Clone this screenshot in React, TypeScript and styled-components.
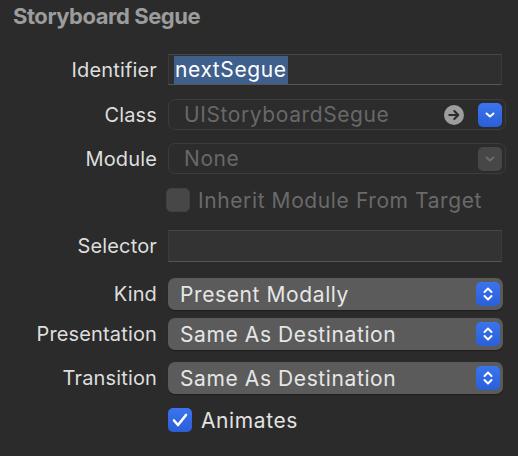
import React from "react";
import styled, { createGlobalStyle } from "styled-components";

const Global = createGlobalStyle`
  html, body { margin: 0; padding: 0; background: #2b2b2b; }
  body { font-family: Inter, "Open Sans", "Liberation Sans", sans-serif; -webkit-font-smoothing: antialiased; }
`;

const Panel = styled.div`
  width: 518px;
  height: 456px;
  background: #2b2b2b;
  box-sizing: border-box;
  padding: 2px 0 0 0;
  display: flex;
  flex-direction: column;
`;

const Title = styled.div`
  font-size: 22px;
  font-weight: 700;
  color: #9c9c9c;
  line-height: 28px;
  padding-left: 13px;
  letter-spacing: -0.45px;
`;

const Row = styled.div<{ $mt: number; $h: number }>`
  display: grid;
  grid-template-columns: 157px 1fr;
  column-gap: 11px;
  align-items: center;
  margin-top: ${(p) => p.$mt}px;
  height: ${(p) => p.$h}px;
  padding-right: 12px;
`;

const Label = styled.div`
  text-align: right;
  font-size: 20px;
  letter-spacing: 0.15px;
  color: #dedede;
  white-space: nowrap;
`;

const TextField = styled.div`
  height: 31px;
  width: 334px;
  box-sizing: border-box;
  background: #2f2f2f;
  border: 1px solid #3a3a3a;
  border-top-color: #474747;
  border-bottom-color: #555555;
  display: flex;
  align-items: center;
  padding-left: 5px;
`;

const Selection = styled.span`
  background: #3f5f8c;
  color: #ffffff;
  font-size: 21px;
  letter-spacing: 0.6px;
  line-height: 28px;
  padding: 0 1px;
`;

const Combo = styled.div`
  height: 31px;
  width: 338px;
  box-sizing: border-box;
  border: 1px solid #3c3c3c;
  border-radius: 7px;
  background: #2c2c2c;
  display: flex;
  align-items: center;
  padding: 0 3px 0 15px;
  color: #686868;
  font-size: 21px;
  letter-spacing: 0.6px;
`;

const ComboText = styled.span`
  flex: 1;
  white-space: nowrap;
`;

const Btn = styled.div<{ $blue?: boolean }>`
  width: 24px;
  height: 24px;
  flex: none;
  border-radius: 5px;
  display: flex;
  align-items: center;
  justify-content: center;
  background: ${(p) => (p.$blue ? "linear-gradient(#3a74ee, #2a5fd8)" : "#474747")};
`;

const ArrowCircle = styled.div`
  margin-right: 14px;
  display: flex;
`;

const CheckRow = styled.div<{ $mt: number; $x: number; $disabled?: boolean }>`
  display: flex;
  align-items: center;
  margin-top: ${(p) => p.$mt}px;
  padding-left: ${(p) => p.$x}px;
  height: 24px;
  gap: ${(p) => (p.$disabled ? 8 : 9)}px;
  font-size: 21px;
  letter-spacing: 0.6px;
  color: ${(p) => (p.$disabled ? "#6a6a6a" : "#e2e2e2")};
`;

const Box = styled.div<{ $on?: boolean }>`
  width: 24px;
  height: 24px;
  box-sizing: border-box;
  border-radius: 5px;
  display: flex;
  align-items: center;
  justify-content: center;
  background: ${(p) => (p.$on ? "linear-gradient(#3a74ee, #2a5fd8)" : "#474747")};
  border: ${(p) => (p.$on ? "none" : "1px solid #404040")};
`;

const EmptyField = styled(TextField)`
  height: 32px;
  background: #333333;
`;

const Popup = styled.div`
  height: 32px;
  width: 335px;
  box-sizing: border-box;
  border-radius: 7px;
  background: #5b5b5b;
  box-shadow: 0 1px 1px rgba(0, 0, 0, 0.35);
  display: flex;
  align-items: center;
  padding: 0 3px 0 12px;
  color: #e6e6e6;
  font-size: 21px;
  letter-spacing: 0.6px;
`;

const ChevronDown = ({ color }: { color: string }) => (
  <svg width="12" height="8" viewBox="0 0 12 8">
    <path d="M2.5 2.5 L6 5.5 L9.5 2.5" fill="none" stroke={color} strokeWidth="2" strokeLinecap="round" strokeLinejoin="round" />
  </svg>
);

const Stepper = () => (
  <svg width="12" height="18" viewBox="0 0 12 18">
    <path d="M2.5 7 L6 3.5 L9.5 7" fill="none" stroke="#fff" strokeWidth="2" strokeLinecap="round" strokeLinejoin="round" />
    <path d="M2.5 11 L6 14.5 L9.5 11" fill="none" stroke="#fff" strokeWidth="2" strokeLinecap="round" strokeLinejoin="round" />
  </svg>
);

const GoArrow = () => (
  <svg width="20" height="20" viewBox="0 0 20 20">
    <circle cx="10" cy="10" r="10" fill="#9d9d9d" />
    <path d="M5.3 10 H14.2 M10.3 6 L14.3 10 L10.3 14" fill="none" stroke="#2b2b2b" strokeWidth="2" strokeLinecap="round" strokeLinejoin="round" />
  </svg>
);

const Check = () => (
  <svg width="18" height="16" viewBox="0 0 18 16">
    <path d="M3 8.5 L7 13 L15 3" fill="none" stroke="#fff" strokeWidth="2.6" strokeLinecap="round" strokeLinejoin="round" />
  </svg>
);

export default function App() {
  return (
    <>
      <Global />
      <Panel>
        <Title>Storyboard Segue</Title>
        <Row $mt={24} $h={31}>
          <Label>Identifier</Label>
          <TextField>
            <Selection>nextSegue</Selection>
          </TextField>
        </Row>
        <Row $mt={14} $h={31}>
          <Label>Class</Label>
          <Combo>
            <ComboText>UIStoryboardSegue</ComboText>
            <ArrowCircle>
              <GoArrow />
            </ArrowCircle>
            <Btn $blue>
              <ChevronDown color="#ffffff" />
            </Btn>
          </Combo>
        </Row>
        <Row $mt={13} $h={31}>
          <Label>Module</Label>
          <Combo>
            <ComboText>None</ComboText>
            <Btn>
              <ChevronDown color="#6c6c6c" />
            </Btn>
          </Combo>
        </Row>
        <CheckRow $mt={14} $x={166} $disabled>
          <Box />
          <span>Inherit Module From Target</span>
        </CheckRow>
        <Row $mt={18} $h={32}>
          <Label>Selector</Label>
          <EmptyField />
        </Row>
        <Row $mt={16} $h={32}>
          <Label>Kind</Label>
          <Popup>
            <ComboText>Present Modally</ComboText>
            <Btn $blue>
              <Stepper />
            </Btn>
          </Popup>
        </Row>
        <Row $mt={8} $h={32}>
          <Label>Presentation</Label>
          <Popup>
            <ComboText>Same As Destination</ComboText>
            <Btn $blue>
              <Stepper />
            </Btn>
          </Popup>
        </Row>
        <Row $mt={12} $h={32}>
          <Label>Transition</Label>
          <Popup>
            <ComboText>Same As Destination</ComboText>
            <Btn $blue>
              <Stepper />
            </Btn>
          </Popup>
        </Row>
        <CheckRow $mt={14} $x={168}>
          <Box $on>
            <Check />
          </Box>
          <span>Animates</span>
        </CheckRow>
      </Panel>
    </>
  );
}
